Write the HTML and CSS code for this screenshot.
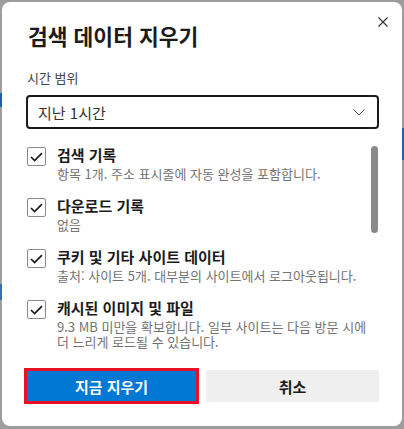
FILE: index.html
```html
<!DOCTYPE html>
<html lang="ko">
<head>
    <meta charset="UTF-8">
    <title>검색 데이터 지우기</title>
    <link rel="stylesheet" href="styles.css">
</head>
<body>
<span class="peek peek-left"></span>
<span class="peek peek-left2"></span>
<span class="peek peek-right"></span>

<div class="dialog">
    <button class="close" aria-label="닫기">
        <svg width="10" height="10" viewBox="0 0 10 10"><path d="M0.5 0.5 L9.5 9.5 M9.5 0.5 L0.5 9.5" stroke="#333" stroke-width="1.1" fill="none"/></svg>
    </button>
    <h1 class="title">검색 데이터 지우기</h1>

    <div class="field-label">시간 범위</div>
    <div class="select">
        <span>지난 1시간</span>
        <svg width="12" height="7" viewBox="0 0 12 7"><path d="M0.5 0.5 L6 6 L11.5 0.5" stroke="#555" stroke-width="1" fill="none"/></svg>
    </div>

    <div class="scroll-area">
        <div class="items">
            <div class="item">
                <span class="check"><svg width="13" height="10" viewBox="0 0 13 10"><path d="M1 5 L4.6 8.6 L12 1.2" stroke="#1b1b1b" stroke-width="1.7" fill="none"/></svg></span>
                <div class="item-text">
                    <div class="item-title">검색 기록</div>
                    <div class="item-sub">항목 1개. 주소 표시줄에 자동 완성을 포함합니다.</div>
                </div>
            </div>
            <div class="item">
                <span class="check"><svg width="13" height="10" viewBox="0 0 13 10"><path d="M1 5 L4.6 8.6 L12 1.2" stroke="#1b1b1b" stroke-width="1.7" fill="none"/></svg></span>
                <div class="item-text">
                    <div class="item-title">다운로드 기록</div>
                    <div class="item-sub">없음</div>
                </div>
            </div>
            <div class="item">
                <span class="check"><svg width="13" height="10" viewBox="0 0 13 10"><path d="M1 5 L4.6 8.6 L12 1.2" stroke="#1b1b1b" stroke-width="1.7" fill="none"/></svg></span>
                <div class="item-text">
                    <div class="item-title">쿠키 및 기타 사이트 데이터</div>
                    <div class="item-sub">출처: 사이트 5개. 대부분의 사이트에서 로그아웃됩니다.</div>
                </div>
            </div>
            <div class="item">
                <span class="check"><svg width="13" height="10" viewBox="0 0 13 10"><path d="M1 5 L4.6 8.6 L12 1.2" stroke="#1b1b1b" stroke-width="1.7" fill="none"/></svg></span>
                <div class="item-text">
                    <div class="item-title">캐시된 이미지 및 파일</div>
                    <div class="item-sub">9.3 MB 미만을 확보합니다. 일부 사이트는 다음 방문 시에 더 느리게 로드될 수 있습니다.</div>
                </div>
            </div>
        </div>
        <div class="scrollbar"><div class="thumb"></div></div>
    </div>

    <div class="actions">
        <button class="btn btn-primary">지금 지우기</button>
        <button class="btn btn-secondary">취소</button>
    </div>
</div>
</body>
</html>
```

FILE: styles.css
```css
html, body {
    margin: 0;
    padding: 0;
}
body {
    font-family: "Noto Sans CJK KR", "Noto Sans", sans-serif;
    background-color: #9d9d9d;
    color: #1b1b1b;
    width: 404px;
    height: 429px;
    overflow: hidden;
    position: relative;
    padding-top: 2px;
    box-sizing: border-box;
}
/* bits of the page behind the dialog */
.peek {
    position: absolute;
    background-color: #1e5fa8;
}
.peek-left { left: 0; top: 93px; width: 2px; height: 14px; }
.peek-left2 { left: 0; top: 284px; width: 2px; height: 16px; background-color: #3a70b0; }
.peek-right { right: 0; top: 128px; width: 2px; height: 32px; }

.dialog {
    position: relative;
    margin-left: 2px;
    width: 400px;
    height: 424px;
    box-sizing: border-box;
    padding: 17px 23px 0 24px;
    background: #ffffff;
    border-radius: 8px;
}
.close {
    position: absolute;
    top: 14px;
    right: 13px;
    width: 12px;
    height: 12px;
    padding: 1px;
    border: none;
    background: none;
    display: flex;
}
.title {
    margin: 0 0 0 2px;
    font-size: 21.5px;
    font-weight: 600;
    line-height: 34px;
}
.field-label {
    margin: 16px 0 0 1px;
    font-size: 13px;
    line-height: 18px;
    color: #444;
}
.select {
    margin-top: 8px;
    height: 34px;
    box-sizing: border-box;
    border: 2px solid #1b1b1b;
    border-radius: 4px;
    padding: 0 12px 0 10px;
    display: flex;
    align-items: center;
    justify-content: space-between;
    font-size: 15px;
    color: #333;
}
.scroll-area {
    margin-top: 16px;
    height: 207px;
    display: flex;
    overflow: hidden;
}
.items {
    flex: 1;
}
.item {
    display: flex;
    gap: 11px;
    margin-bottom: 15px;
}
.check {
    width: 17px;
    height: 17px;
    margin: 2px 0 0 1px;
    flex: none;
    border: 1px solid #8a8a8a;
    border-radius: 2px;
    display: flex;
    align-items: center;
    justify-content: center;
}
.item-title {
    font-size: 15px;
    font-weight: 600;
    line-height: 20px;
}
.item-sub {
    margin-top: 1px;
    font-size: 13px;
    line-height: 15px;
    color: #737373;
}
.scrollbar {
    width: 7px;
    margin-right: 1px;
    flex: none;
}
.thumb {
    margin-top: 1px;
    height: 87px;
    border-radius: 4px;
    background: #8a8a8a;
}
.actions {
    margin-top: 18px;
    display: grid;
    grid-template-columns: 170px 1fr;
    gap: 10px;
}
.btn {
    height: 32px;
    border: none;
    border-radius: 2px;
    font-family: inherit;
    font-size: 15px;
    font-weight: 600;
}
.btn-primary {
    margin: 1px 0 0 1px;
    height: 30px;
    border-radius: 0;
    background: #0078d4;
    color: #ffffff;
    outline: 3px solid #e81123;
}
.btn-secondary {
    background: #efefef;
    color: #1b1b1b;
}
```
